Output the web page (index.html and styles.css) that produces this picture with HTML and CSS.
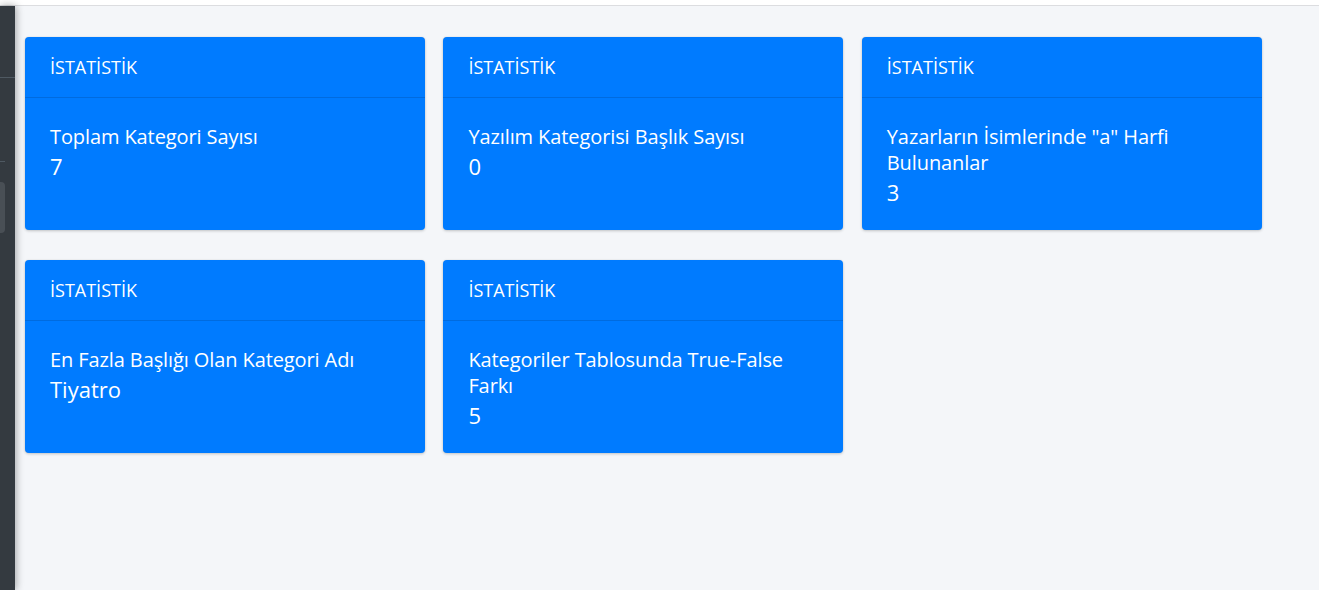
FILE: index.html
```html
<!DOCTYPE html>
<html lang="tr">
<head>
<meta charset="utf-8">
<title>İstatistik</title>
<link rel="stylesheet" href="styles.css">
</head>
<body>
<div class="topbar"></div>
<div class="layout">
  <aside class="sidebar">
    <div class="sb-line sb-line-full"></div>
    <div class="sb-line sb-line-short"></div>
    <div class="sb-box"></div>
  </aside>
  <main class="content">
    <div class="cards">
      <div class="card">
        <div class="card-header">İSTATİSTİK</div>
        <div class="card-body">
          <div class="card-title">Toplam Kategori Sayısı</div>
          <div class="card-value">7</div>
        </div>
      </div>
      <div class="card">
        <div class="card-header">İSTATİSTİK</div>
        <div class="card-body">
          <div class="card-title">Yazılım Kategorisi Başlık Sayısı</div>
          <div class="card-value">0</div>
        </div>
      </div>
      <div class="card">
        <div class="card-header">İSTATİSTİK</div>
        <div class="card-body">
          <div class="card-title">Yazarların İsimlerinde "a" Harfi Bulunanlar</div>
          <div class="card-value">3</div>
        </div>
      </div>
      <div class="card">
        <div class="card-header">İSTATİSTİK</div>
        <div class="card-body">
          <div class="card-title">En Fazla Başlığı Olan Kategori Adı</div>
          <div class="card-value card-value-lg">Tiyatro</div>
        </div>
      </div>
      <div class="card">
        <div class="card-header">İSTATİSTİK</div>
        <div class="card-body">
          <div class="card-title">Kategoriler Tablosunda True-False Farkı</div>
          <div class="card-value">5</div>
        </div>
      </div>
    </div>
  </main>
</div>
</body>
</html>
```

FILE: styles.css
```css
* { box-sizing: border-box; }
html, body { margin: 0; padding: 0; }
body {
  background: #f4f6f9;
  font-family: "Open Sans", "Noto Sans", sans-serif;
  height: 590px;
  overflow: hidden;
}
.topbar {
  height: 6px;
  background: #ffffff;
  border-bottom: 1px solid #dcdde0;
}
.layout {
  display: flex;
  height: 584px;
}
.sidebar {
  width: 15px;
  flex: none;
  background: #343a40;
  box-shadow: 0 0 10px rgba(0,0,0,0.25), 2px 0 6px rgba(0,0,0,0.12);
  position: relative;
  z-index: 2;
  display: flex;
  flex-direction: column;
}
.sb-line {
  height: 1px;
  background: #4f5962;
}
.sb-line-full { margin-top: 71px; width: 15px; }
.sb-line-short { margin-top: 83px; width: 5px; }
.sb-box {
  margin-top: 20px;
  width: 5px;
  height: 51px;
  background: #494f55;
  border-radius: 0 4px 4px 0;
}
.content {
  flex: 1;
  padding: 31px 0 0 10px;
}
.cards {
  display: grid;
  grid-template-columns: 400px 400px 400px;
  column-gap: 18.4px;
  row-gap: 30px;
}
.card {
  background: #007bff;
  color: #ffffff;
  border-radius: 4px;
  box-shadow: 0 0 1px rgba(0,0,0,0.125), 0 1px 3px rgba(0,0,0,0.2);
  height: 193px;
  display: flex;
  flex-direction: column;
}
.card-header {
  height: 61px;
  flex: none;
  padding: 0 25px;
  display: flex;
  align-items: center;
  font-size: 18px;
  border-bottom: 1px solid rgba(0,0,0,0.125);
}
.card-body {
  padding: 26px 25px 0;
}
.card-title {
  font-size: 20px;
  line-height: 26px;
  font-weight: 500;
  letter-spacing: -0.1px;
}
.card-value {
  font-size: 22px;
  line-height: 28px;
  font-weight: 500;
  margin-top: 2px;
}
.card-value-lg {
  font-size: 22px;
}
```
